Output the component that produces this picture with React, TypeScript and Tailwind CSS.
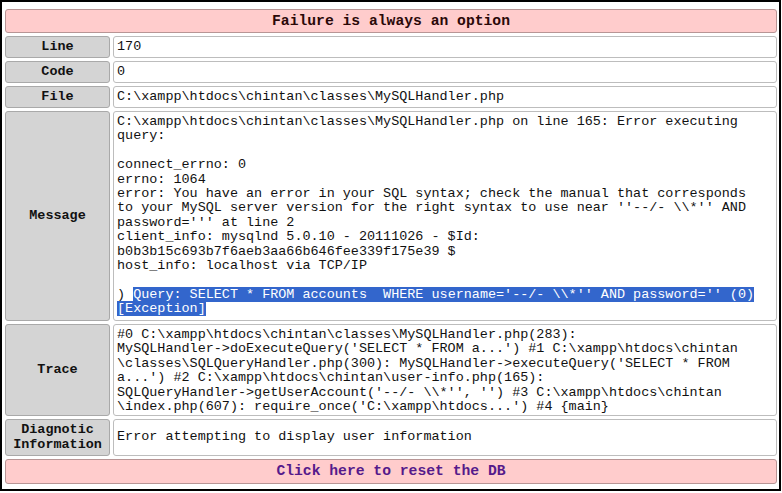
import React from "react"

const mono = "font-['Liberation_Mono','Courier_New',monospace]"

const messageLines = [
  "C:\\xampp\\htdocs\\chintan\\classes\\MySQLHandler.php on line 165: Error executing",
  "query:",
  "",
  "connect_errno: 0",
  "errno: 1064",
  "error: You have an error in your SQL syntax; check the manual that corresponds",
  "to your MySQL server version for the right syntax to use near ''--/- \\\\*'' AND",
  "password=''' at line 2",
  "client_info: mysqlnd 5.0.10 - 20111026 - $Id:",
  "b0b3b15c693b7f6aeb3aa66b646fee339f175e39 $",
  "host_info: localhost via TCP/IP",
  "",
]

const traceLines = [
  "#0 C:\\xampp\\htdocs\\chintan\\classes\\MySQLHandler.php(283):",
  "MySQLHandler->doExecuteQuery('SELECT * FROM a...') #1 C:\\xampp\\htdocs\\chintan",
  "\\classes\\SQLQueryHandler.php(300): MySQLHandler->executeQuery('SELECT * FROM",
  "a...') #2 C:\\xampp\\htdocs\\chintan\\user-info.php(165):",
  "SQLQueryHandler->getUserAccount('--/- \\\\*'', '') #3 C:\\xampp\\htdocs\\chintan",
  "\\index.php(607): require_once('C:\\xampp\\htdocs...') #4 {main}",
]

function Label({ children }: { children: React.ReactNode }) {
  return (
    <div className="w-[105px] shrink-0 flex items-center justify-center text-center rounded-[3px] border border-[#a9a9a9] bg-[#d4d4d4] font-bold text-[#111] leading-[14.4px]">
      {children}
    </div>
  )
}

function Row({ label, h, top, children }: { label: React.ReactNode; h: string; top?: boolean; children: React.ReactNode }) {
  return (
    <div className={`flex gap-[3px] ${h}`}>
      <Label>{label}</Label>
      <div
        className={`flex-1 flex rounded-[3px] border border-[#bdbdbd] bg-white px-[3px] text-[#111] leading-[14.4px] whitespace-pre ${
          top ? "items-start pt-[3px]" : "items-center"
        }`}
      >
        <div>{children}</div>
      </div>
    </div>
  )
}

export default function App() {
  return (
    <div className="w-[782px] h-[493px] bg-white">
      <div className={`w-[781px] h-[491px] border-2 border-black bg-white pl-[3px] pr-[2px] pt-[7px] flex flex-col gap-[3px] text-[13.45px] ${mono}`}>
        {/* Header */}
        <div className="h-[24px] flex items-center justify-center rounded-[3px] border border-[#b89595] bg-[#ffcccc] text-[14.7px] font-bold text-[#2a0808]">
          Failure is always an option
        </div>

        <Row label="Line" h="h-[22px]">170</Row>
        <Row label="Code" h="h-[22px]">0</Row>
        <Row label="File" h="h-[22px]">C:\xampp\htdocs\chintan\classes\MySQLHandler.php</Row>

        <Row label="Message" h="h-[210px]" top>
          {messageLines.map((l, i) => (
            <div key={i} className="h-[14.4px]">{l}</div>
          ))}
          <div className="h-[14.4px]">
            ) <span className="bg-[#3366cc] text-white">Query: SELECT * FROM accounts  WHERE username='--/- \\*'' AND password='' (0)</span>
          </div>
          <div className="h-[14.4px]">
            <span className="bg-[#3366cc] text-white">[Exception]</span>
          </div>
        </Row>

        <Row label="Trace" h="h-[92px]" top>
          {traceLines.map((l, i) => (
            <div key={i} className="h-[14.4px]">{l}</div>
          ))}
        </Row>

        <Row
          label={
            <span>
              Diagnotic
              <br />
              Information
            </span>
          }
          h="h-[37px]"
        >
          Error attempting to display user information
        </Row>

        {/* Footer */}
        <div className="h-[25px] flex items-center justify-center rounded-[3px] border border-[#b89595] bg-[#ffcccc] text-[14.7px] font-bold text-[#551a8b] cursor-pointer">
          Click here to reset the DB
        </div>
      </div>
    </div>
  )
}
